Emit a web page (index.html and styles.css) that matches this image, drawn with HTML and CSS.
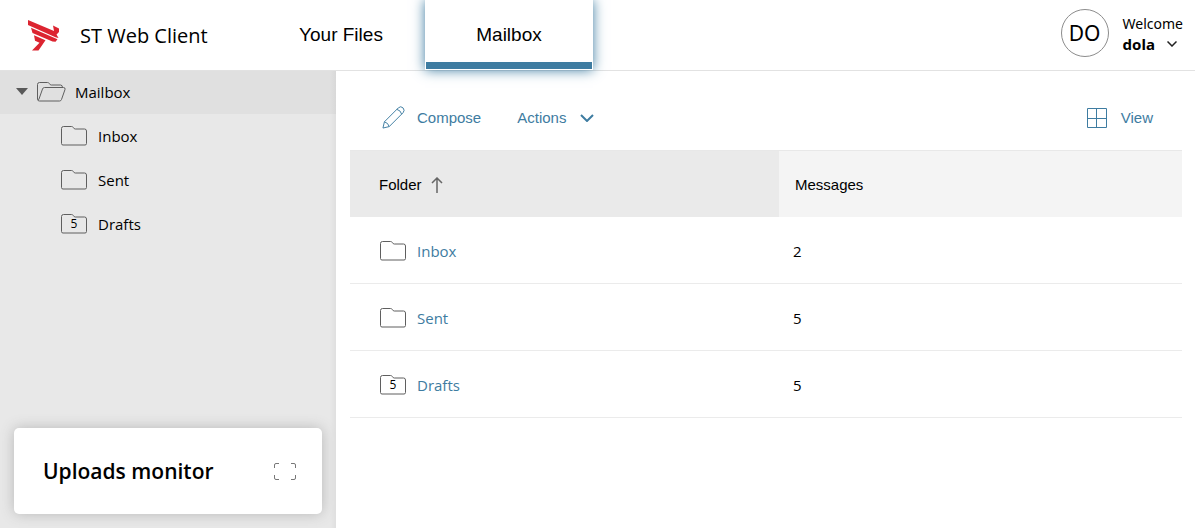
FILE: index.html
```html
<!DOCTYPE html>
<html lang="en">
<head>
<meta charset="utf-8">
<title>ST Web Client</title>
<link rel="stylesheet" href="styles.css">
</head>
<body>
<svg class="symbols" aria-hidden="true">
  <symbol id="folder" viewBox="0 0 26 20"><path d="M.5 17.5V2.500Q.5.500 2.500.500H10.500Q11.800.500 12.300 1.500Q13 3 14.300 3H23.500Q25.500 3 25.500 5V17.500Q25.500 19 24 19H2Q.500 19 .500 17.500Z"/></symbol>
</svg>
<header class="header">
  <a class="brand" href="#">
    <svg class="logo" viewBox="0 0 32 31" aria-hidden="true"><path d="M0 0 26 11 25 5.500 31 8.500V12L28.500 14.500 30.500 18 27.500 17.200 0 5ZM3 7.800 29.500 19.200 27.500 21.800 24.500 21.500 4.500 13ZM6 15.200 17.500 20.200 10.500 30.500H4L11.500 22.800 7 20.800Z"/></svg>
    <span>ST Web Client</span>
  </a>
  <nav class="tabs">
    <a class="tab" href="#">Your Files</a>
    <a class="tab tab-active" href="#" aria-current="page">Mailbox</a>
  </nav>
  <button class="user" type="button">
    <span class="avatar">DO</span>
    <span class="user-text">
      <span class="welcome">Welcome</span>
      <span class="user-name"><b>dola</b><svg class="small-chevron" viewBox="0 0 10 6" aria-hidden="true"><path d="M.5.500 5 5 9.500.500"/></svg></span>
    </span>
  </button>
</header>
<div class="body">
  <aside class="sidebar">
    <nav class="tree">
      <a class="tree-row tree-root" href="#">
        <svg class="caret" viewBox="0 0 12 7" aria-hidden="true"><path d="M0 0H12L6 7Z"/></svg>
        <svg class="icon open-folder" viewBox="0 0 29 20" aria-hidden="true"><path d="M.500 17.500V2.500Q.500.500 2.500.500H10.500Q11.800.500 12.300 1.500Q13 3 14.300 3H23.500Q25.500 3 25.500 5.500M.500 17.500Q.700 19 2.500 19H22.500Q24 19 24.500 17.500L28 7.500Q28.500 5.500 26.500 5.500H7.500Q6 5.500 5.500 7L2 17Q1.500 18.500 .700 17.500"/></svg>
        <span>Mailbox</span>
      </a>
      <a class="tree-row" href="#"><span class="folder"><svg class="icon"><use href="#folder"/></svg></span><span>Inbox</span></a>
      <a class="tree-row" href="#"><span class="folder"><svg class="icon"><use href="#folder"/></svg></span><span>Sent</span></a>
      <a class="tree-row" href="#"><span class="folder"><svg class="icon"><use href="#folder"/></svg><span class="count">5</span></span><span>Drafts</span></a>
    </nav>
    <section class="uploads">
      <h2 class="uploads-title">Uploads monitor</h2>
      <button class="expand" type="button" aria-label="Expand">
        <svg viewBox="0 0 22 17" aria-hidden="true"><path d="M.500 5V2Q.500.500 2 .500H5M17 .500H20Q21.500.500 21.500 2V5M21.500 12V15Q21.500 16.500 20 16.500H17M5 16.500H2Q.500 16.500 .500 15V12"/></svg>
      </button>
    </section>
  </aside>
  <main class="main">
    <div class="toolbar">
      <button class="tool" type="button">
        <svg class="pencil" viewBox="0 0 24 24" aria-hidden="true"><path d="M1 23 2.500 16.500 17 2Q19.500-.500 22 2Q24.200 4.500 22 7L7.500 21.500ZM15.500 3.500Q19.500 4.500 20.500 8.500M2.500 16.500Q6.500 17.500 7.500 21.500"/></svg>
        Compose
      </button>
      <button class="tool" type="button">
        Actions
        <svg class="chevron" viewBox="0 0 14 8" aria-hidden="true"><path d="M1 1 7 7 13 1"/></svg>
      </button>
      <button class="tool tool-view" type="button">
        <svg class="grid-icon" viewBox="0 0 20 20" aria-hidden="true"><path d="M.500.500H19.500V19.500H.500Z M9.500 1V19 M1 10.500H19"/></svg>
        View
      </button>
    </div>
    <table class="table">
      <thead>
        <tr>
          <th class="col-folder"><button class="sort" type="button">Folder<svg class="arrow" viewBox="0 0 12 16" aria-hidden="true"><path d="M6 16V1M1 6 6 1 11 6"/></svg></button></th>
          <th class="col-messages">Messages</th>
        </tr>
      </thead>
      <tbody>
        <tr><td><a class="item" href="#"><span class="folder"><svg class="icon"><use href="#folder"/></svg></span>Inbox</a></td><td>2</td></tr>
        <tr><td><a class="item" href="#"><span class="folder"><svg class="icon"><use href="#folder"/></svg></span>Sent</a></td><td>5</td></tr>
        <tr><td><a class="item" href="#"><span class="folder"><svg class="icon"><use href="#folder"/></svg><span class="count">5</span></span>Drafts</a></td><td>5</td></tr>
      </tbody>
    </table>
  </main>
</div>
</body>
</html>
```
FILE: styles.css
```css
* { box-sizing: border-box; }
body {
  margin: 0;
  min-height: 100vh;
  display: flex;
  flex-direction: column;
  background: #fff;
  color: #000;
  font-family: "Open Sans", "Noto Sans", sans-serif;
  font-size: 15px;
  line-height: 20px;
}
a { color: inherit; text-decoration: none; }
button {
  padding: 0;
  border: 0;
  background: none;
  color: inherit;
  font: inherit;
  cursor: pointer;
}
svg { display: block; fill: none; flex: none; }
.symbols { position: absolute; width: 0; height: 0; }

.header {
  display: flex;
  align-items: stretch;
  height: 71px;
  border-bottom: 1px solid #e2e2e2;
}
.brand {
  display: flex;
  align-items: center;
  gap: 20px;
  width: 257px;
  padding: 1px 0 0 28px;
  font-size: 20px;
}
.logo { width: 32px; height: 31px; fill: #dc2430; }
.tabs {
  display: flex;
  font-family: "Liberation Sans", Arial, sans-serif;
  font-size: 19px;
}
.tab {
  display: flex;
  align-items: center;
  justify-content: center;
  width: 168px;
}
.tab-active {
  position: relative;
  z-index: 1;
  border: 1px solid #fff;
  border-top: 0;
  background: linear-gradient(#3e7ca1, #3e7ca1) bottom / 100% 7px no-repeat #fff;
  box-shadow: 0 0 12px #3e7ca1;
}
.user {
  display: flex;
  align-items: center;
  gap: 14px;
  margin-left: auto;
  padding: 0 12px 4px 0;
  text-align: left;
}
.avatar {
  display: grid;
  place-items: center;
  width: 48px;
  height: 48px;
  border: 1px solid #8c8c8c;
  border-radius: 50%;
  font-family: "Noto Sans", sans-serif;
  font-size: 21px;
}
.user-text {
  display: flex;
  flex-direction: column;
  padding-top: 2px;
  font-family: "Noto Sans", sans-serif;
}
.welcome { font-size: 14px; }
.user-name { display: flex; align-items: center; gap: 12px; }
.small-chevron { width: 10px; height: 6px; stroke: #222; stroke-width: 1.5; }

.body { display: flex; flex: 1; }
.sidebar {
  display: flex;
  flex-direction: column;
  justify-content: space-between;
  flex: none;
  width: 336px;
  background: linear-gradient(to left, #dfdfdf, #e8e8e8 6px);
}
.tree-row {
  display: flex;
  align-items: center;
  gap: 11px;
  height: 44px;
  padding-left: 61px;
}
.tree-root {
  gap: 10px;
  height: 43px;
  padding: 0 0 2px 16px;
  background: linear-gradient(to left, #d8d8d8, #e0e0e0 6px);
}
.caret { width: 12px; height: 7px; fill: #595959; }
.icon { width: 26px; height: 20px; stroke: #5f5f5f; }
.open-folder { width: 29px; margin: 0 -1px; }
.folder { display: grid; place-items: center; }
.folder > * { grid-area: 1 / 1; }
.count { color: #000; font-size: 12px; line-height: 20px; }
.uploads {
  display: flex;
  align-items: center;
  justify-content: space-between;
  height: 86px;
  margin: 14px;
  padding: 0 26px 0 29px;
  border-radius: 5px;
  background: #fff;
  box-shadow: 0 0 14px #b8b8b8;
}
.uploads-title { margin: 0; font-size: 21px; font-weight: 600; }
.expand svg { width: 22px; height: 17px; stroke: #777; }

.main { flex: 1; padding: 0 13px 0 14px; }
.toolbar {
  display: flex;
  align-items: center;
  gap: 36px;
  height: 79px;
  padding: 14px 29px 0 32px;
  color: #3e7ca1;
  font-family: "Liberation Sans", Arial, sans-serif;
}
.tool { display: flex; align-items: center; gap: 12px; }
.tool svg { stroke: #3e7ca1; }
.tool-view { gap: 14px; margin-left: auto; }
.pencil { width: 23px; height: 23px; }
.chevron { width: 14px; height: 8px; margin-left: 2px; stroke-width: 2; }
.grid-icon { width: 20px; height: 20px; }

.table { width: 100%; border-collapse: separate; border-spacing: 0; table-layout: fixed; }
.table th {
  height: 67px;
  padding: 1px 0 0 16px;
  border-top: 1px solid #e8e8e8;
  background: #f4f4f4;
  font-family: "Liberation Sans", Arial, sans-serif;
  font-weight: 400;
  text-align: left;
}
.table .col-folder {
  width: 429px;
  padding-left: 29px;
  background: #eaeaea;
}
.sort { display: flex; align-items: center; gap: 9px; }
.arrow { width: 12px; height: 16px; stroke: #666; stroke-width: 1.5; }
.table td {
  height: 67px;
  padding: 2px 0 0 14px;
  border-bottom: 1px solid #ebebeb;
}
.table td:first-child { padding-left: 30px; }
.item { display: flex; align-items: center; gap: 11px; color: #3e7ca1; }
```
